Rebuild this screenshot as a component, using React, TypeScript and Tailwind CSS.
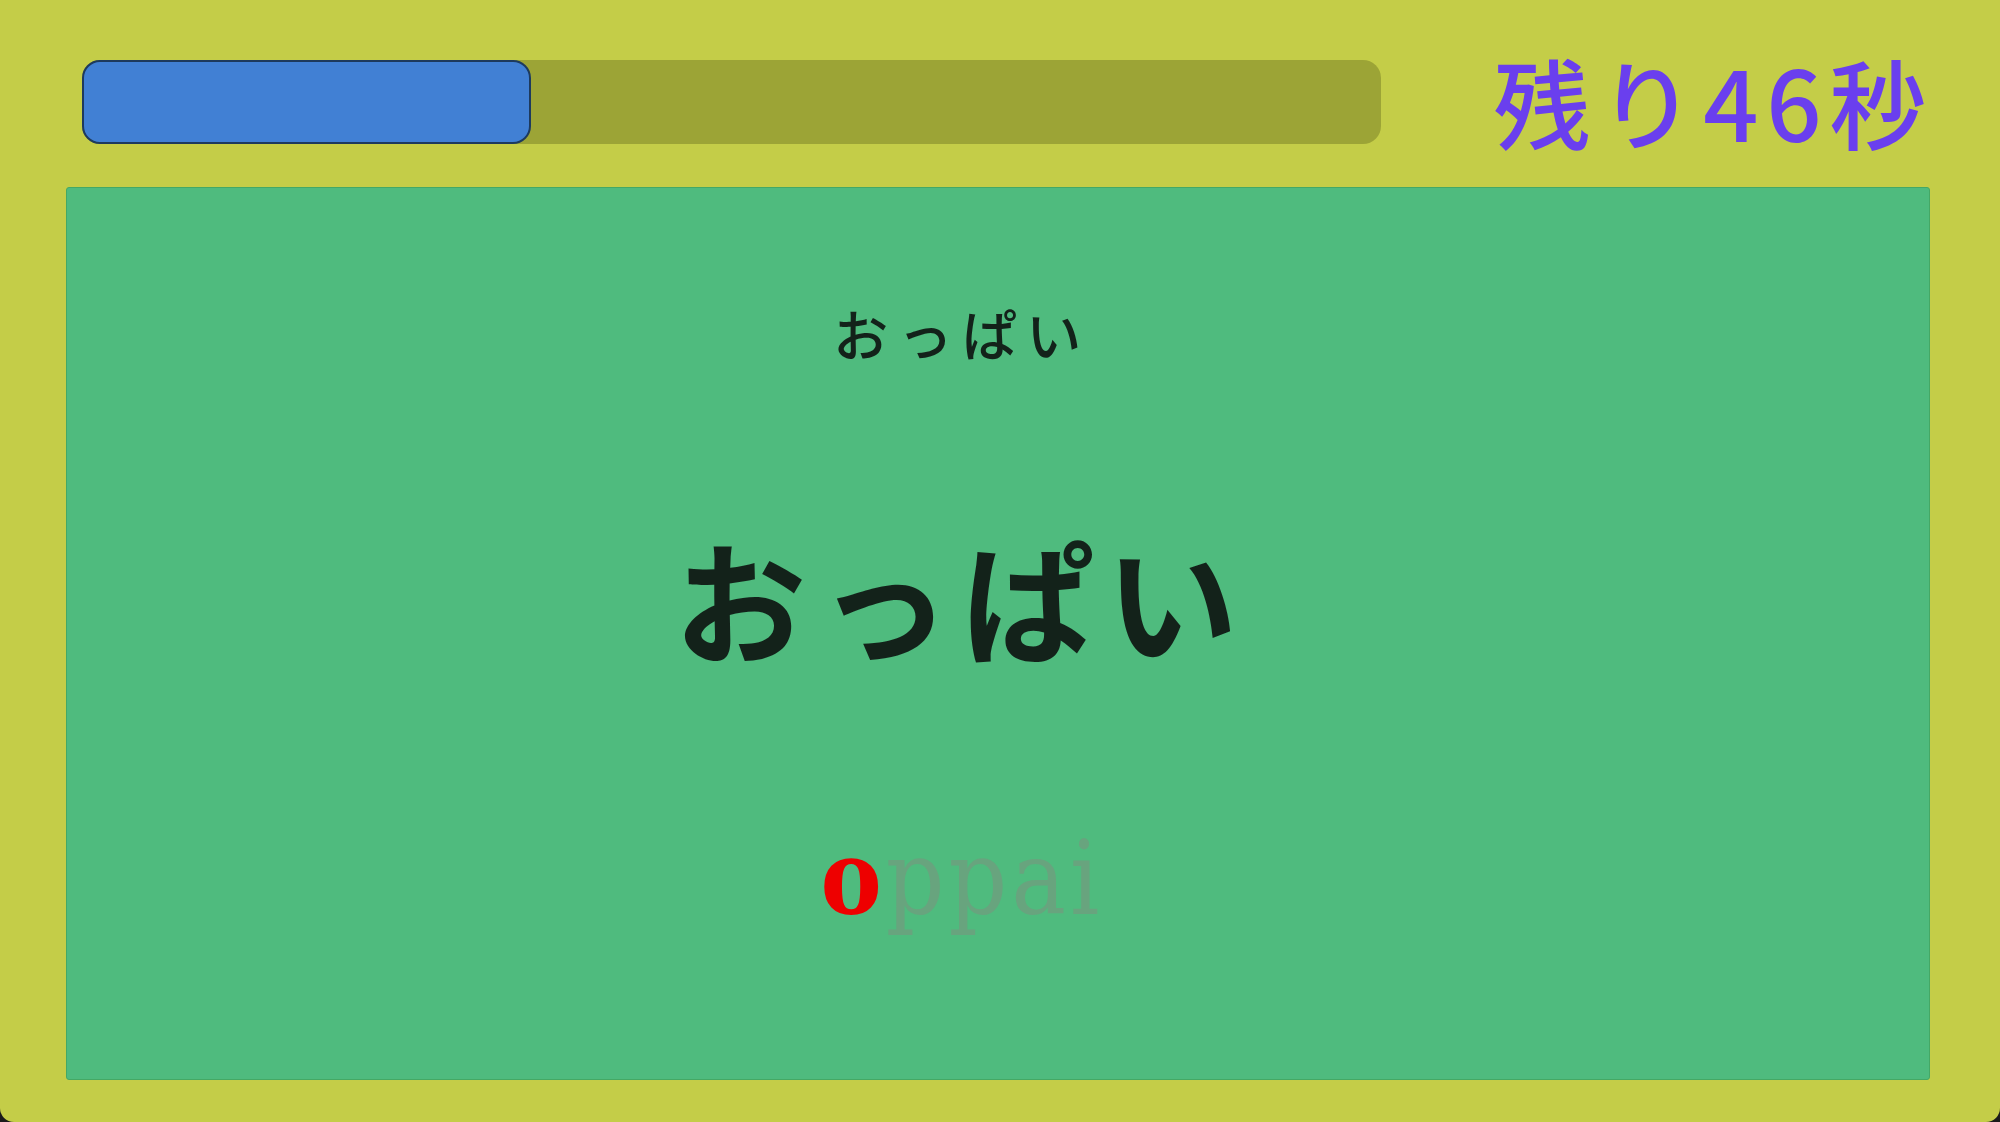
export default function App() {
  const remaining = 46;
  const fillWidth = 449;

  return (
    <div className="w-full h-[1122px] bg-[#1b1b1b]">
      <div className="w-full h-full bg-[#c4cd48] rounded-b-[14px] flex flex-col">
        {/* header: timer bar + seconds left */}
        <div className="h-[187px] flex items-start justify-between pl-[82px] pr-[66px] pt-[58px]">
          <div className="w-[1299px] h-[84px] mt-[2px] rounded-[18px] bg-[#9ca436] flex">
            <div
              className="h-full rounded-[18px] bg-[#4180d4] border-2 border-[#1d3a5e]"
              style={{ width: fillWidth }}
            />
          </div>
          <p className="h-[84px] leading-[84px] text-[97px] tracking-[0.08em] font-medium text-[#6a3fee] font-['Noto_Sans_CJK_JP','Noto_Sans',sans-serif]">
            残り{remaining}秒
          </p>
        </div>

        {/* card */}
        <div className="ml-[66px] mr-[70px] h-[893px] bg-[#4fbb7e] border border-[#44a865] rounded-[3px] flex flex-col items-center pr-[72px] pt-[114px]">
          <p className="h-[60px] leading-[60px] text-[55px] tracking-[0.17em] font-medium text-[#13221a] font-['Noto_Sans_CJK_JP',sans-serif]">
            おっぱい
          </p>
          <p className="mt-[165px] h-[140px] leading-[140px] text-[132px] tracking-[0.09em] font-bold text-[#13221a] font-['Noto_Sans_CJK_JP',sans-serif]">
            おっぱい
          </p>
          <p className="mt-[151px] h-[120px] leading-[120px] text-[102px] tracking-[0.04em] font-['DejaVu_Serif_Condensed','DejaVu_Serif',serif]">
            <span className="text-[#ee0000] font-bold">o</span>
            <span className="text-[#68a47e]">ppai</span>
          </p>
        </div>
      </div>
    </div>
  );
}
